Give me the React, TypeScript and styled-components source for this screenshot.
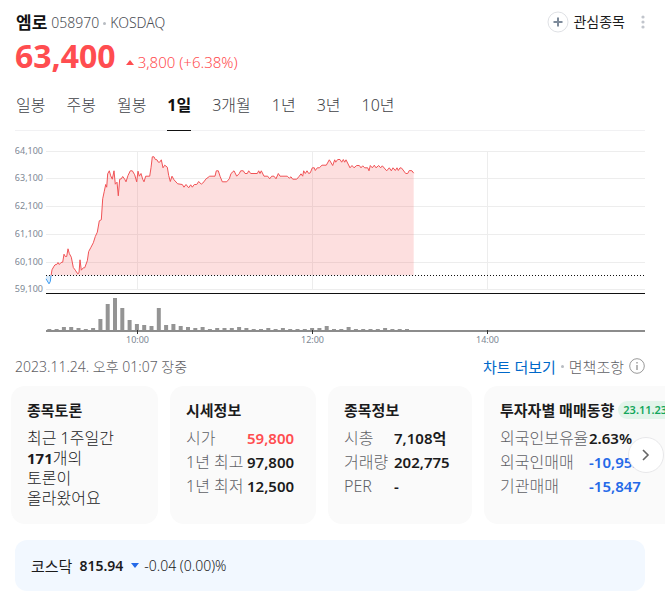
import React from "react";
import styled, { createGlobalStyle } from "styled-components";

const GlobalStyle = createGlobalStyle`
  *, *::before, *::after { box-sizing: border-box; }
  body {
    margin: 0;
    background: #fff;
    color: #1b1b1c;
    font-family: "Noto Sans", "Noto Sans CJK KR", sans-serif;
  }
  button { font: inherit; color: inherit; border: 0; padding: 0; background: none; cursor: pointer; }
  a { color: inherit; text-decoration: none; }
  h1, h2, p, dl, dd, dt { margin: 0; font: inherit; }
`;

const Page = styled.main`
  padding: 11px 20px 14px 15px;
  overflow: hidden;
`;

const Header = styled.header`
  display: flex;
  justify-content: space-between;
  align-items: flex-start;
  height: 26px;
`;

const TitleRow = styled.div`
  display: flex;
  align-items: center;
  gap: 4px;
  padding-left: 1px;
  height: 24px;
  line-height: 24px;
  font-size: 14px;
  font-weight: 300;
  color: #4a4d53;
`;

const Name = styled.h1`
  font-size: 17px;
  font-weight: 700;
  color: #111;
`;

const Dot = styled.span`
  width: 3px;
  height: 3px;
  border-radius: 50%;
  background: #b8bcc2;
`;

const Actions = styled.div`
  display: flex;
  align-items: center;
  gap: 14px;
  margin-right: -2px;
`;

const WatchButton = styled.button`
  display: flex;
  align-items: center;
  gap: 4px;
  font-size: 14px;
  line-height: 20px;
  color: #1b1b1c;
`;

const MoreButton = styled.button`
  display: flex;
  width: 8px;
  justify-content: center;
`;

const PriceRow = styled.div`
  display: flex;
  align-items: center;
  color: #ff4d50;
  height: 38px;
`;

const Price = styled.strong`
  font-size: 32px;
  line-height: 38px;
  font-weight: 700;
`;

const Change = styled.span`
  display: flex;
  align-items: center;
  gap: 4px;
  margin-left: 10px;
  padding-top: 12px;
  font-size: 15px;
  font-weight: 300;
  line-height: 20px;
`;

const Tabs = styled.div`
  display: flex;
  gap: 21px;
  margin-top: 13px;
  padding-left: 1px;
  border-bottom: 1px solid #f1f1f3;
`;

const Tab = styled.button<{ $active?: boolean }>`
  height: 43px;
  padding-bottom: 8px;
  margin-bottom: -1px;
  font-size: 16px;
  line-height: 24px;
  color: ${(p) => (p.$active ? "#111" : "#3f4247")};
  font-weight: ${(p) => (p.$active ? 700 : 300)};
  border-bottom: 1px solid ${(p) => (p.$active ? "#111" : "transparent")};
`;

const Chart = styled.svg`
  display: block;
  width: 100%;
  height: auto;
  margin-top: 4px;
`;

const AxisText = styled.text`
  font-size: 9px;
  fill: #7d8793;
`;

const ChartFooter = styled.div`
  display: flex;
  justify-content: space-between;
  align-items: center;
  margin-top: 4px;
  height: 24px;
  font-size: 14px;
  font-weight: 300;
  color: #5f6166;
`;

const Links = styled.div`
  display: flex;
  align-items: center;
  gap: 5px;
  font-size: 15px;
`;

const MoreLink = styled.a`
  color: #0068c9;
  font-weight: 400;
`;

const Disclaimer = styled.button`
  display: flex;
  align-items: center;
  gap: 5px;
`;

const Carousel = styled.section`
  position: relative;
  margin: 8px -20px 0 -4px;
`;

const Cards = styled.div`
  display: flex;
  gap: 12px;
  overflow: hidden;
`;

const Card = styled.article<{ $width: number }>`
  flex: none;
  width: ${(p) => p.$width}px;
  height: 138px;
  padding: 14px 16px;
  border-radius: 14px;
  background: #fafafa;
`;

const CardTitle = styled.h2`
  display: flex;
  align-items: center;
  gap: 4px;
  margin-bottom: 6px;
  font-size: 15px;
  line-height: 20px;
  font-weight: 700;
  white-space: nowrap;
`;

const DateBadge = styled.span`
  padding: 0 5px;
  border-radius: 9px;
  background: #e2f4ea;
  color: #12a65b;
  font-size: 11px;
  line-height: 18px;
  font-weight: 600;
`;

const Discussion = styled.p`
  font-size: 16px;
  font-weight: 300;
  line-height: 20px;
  padding-top: 2px;

  b { font-size: 15px; font-weight: 700; }
`;

const Stats = styled.dl<{ $label: number }>`
  display: grid;
  grid-template-columns: ${(p) => p.$label}px auto;
  justify-content: start;
  font-size: 16px;
  line-height: 24px;
  white-space: nowrap;
`;

const Label = styled.dt`
  color: #5f6166;
  font-weight: 300;
`;

const tones = { dark: "#1b1b1c", up: "#ff4d50", down: "#2469e8" };

const Value = styled.dd<{ $tone: keyof typeof tones }>`
  font-size: 15px;
  font-weight: 600;
  color: ${(p) => tones[p.$tone]};
`;

const NextButton = styled.button`
  position: absolute;
  top: 51px;
  right: 1px;
  display: grid;
  place-items: center;
  width: 36px;
  height: 36px;
  border: 1px solid #e8e8ea;
  border-radius: 50%;
  background: #fff;
`;

const IndexBar = styled.section`
  display: flex;
  align-items: center;
  margin-top: 16px;
  padding: 0 16px;
  height: 51px;
  border-radius: 12px;
  background: #f2f8ff;
  font-size: 14px;
`;

const IndexName = styled.span`
  font-size: 15px;
  font-weight: 400;
  margin-right: 7px;
`;

const IndexValue = styled.strong`
  font-weight: 600;
  margin-right: 8px;
`;

const IndexChange = styled.span`
  margin-left: 5px;
  font-weight: 300;
`;

/* Series coordinates are stored in thirds of a pixel. */
const SERIES = `138,430 147,445 151,438 153,421 156,403 162,392 165,388 170,387 174,381 178,387 183,381
188,380 192,356 196,363 200,363 204,340 208,354 214,365 220,396 226,404 233,415 237,412 240,373 244,404
250,397 254,397 262,376 266,348 272,337 280,322 286,303 292,290 298,256 304,253 308,190 313,167 317,147
320,155 323,115 328,106 332,121 337,131 342,106 346,146 351,140 355,181 359,131 364,130 368,123 374,131
378,139 384,120 391,106 397,106 404,118 410,139 414,107 418,122 423,114 428,131 432,139 437,122 449,122
453,97 457,64 462,64 466,72 471,73 475,80 479,80 484,73 489,97 494,89 502,95 506,120 511,138 516,122
522,133 533,145 547,147 552,155 558,147 566,157 572,148 577,155 583,147 590,147 596,138 604,146 612,139
617,131 629,122 645,122 649,106 655,106 660,122 667,139 680,139 688,130 693,114 702,106 710,122 718,114
722,106 730,106 735,114 742,114 746,106 752,114 772,114 776,106 780,114 784,106 792,122 803,122 809,130
815,122 822,122 828,130 835,114 840,122 862,122 868,128 873,124 878,131 890,131 898,122 903,115 908,122
911,106 916,114 921,106 926,114 931,112 937,97 943,97 946,105 952,97 958,97 966,89 979,89 988,73 998,90
1004,73 1007,80 1013,72 1020,72 1025,80 1030,72 1034,80 1038,73 1050,97 1056,90 1062,97 1070,90 1078,90
1083,97 1088,91 1094,97 1103,97 1107,106 1111,90 1117,97 1123,89 1128,97 1136,90 1142,97 1147,91 1160,106
1168,97 1174,106 1179,97 1186,105 1191,97 1195,105 1200,97 1205,98 1217,114 1223,114 1228,105 1236,106
1241,113`
  .split(/\s+/)
  .map((pair) => pair.split(",").map(Number))
  .map(([x, y]) => [x / 3 - 15, y / 3 + 0.5]);

const BASE_Y = 140.5;
const LINE = "M" + SERIES.map(([x, y]) => `${x.toFixed(1)} ${y.toFixed(1)}`).join("L");
const LAST_X = SERIES[SERIES.length - 1][0].toFixed(1);
const AREA = `${LINE}L${LAST_X} ${BASE_Y}L31 ${BASE_Y}Z`;

const VOLUMES = [
  2, 2, 4, 4, 3, 2, 3, 12, 27, 33, 23, 11, 7, 6, 5, 23, 6, 7, 5, 4, 3, 4, 2, 3, 3, 3, 4, 3, 2, 2, 3, 2, 3, 2,
  2, 2, 3, 3, 5, 2, 2, 4, 2, 2, 2, 2, 3, 2, 2, 2,
];

const PRICES = [
  { label: "64,100", y: 16.5 },
  { label: "63,100", y: 43.5 },
  { label: "62,100", y: 71.5 },
  { label: "61,100", y: 99.5 },
  { label: "60,100", y: 127.5 },
  { label: "59,100", y: 154.5 },
];

const TIMES = [
  { label: "10:00", x: 122.5 },
  { label: "12:00", x: 297.5 },
  { label: "14:00", x: 472.5 },
];

function PriceChart() {
  return (
    <Chart viewBox="0 0 630 215" role="img" aria-label="엠로 1일 차트">
      <defs>
        <clipPath id="above"><rect x="0" y="0" width="630" height={BASE_Y} /></clipPath>
        <clipPath id="below"><rect x="0" y={BASE_Y} width="630" height="30" /></clipPath>
      </defs>
      {PRICES.map((p) => (
        <g key={p.label}>
          <path d={`M31 ${p.y}H630`} stroke="#ededed" />
          <AxisText x="28" y={p.y + 2.5} textAnchor="end">{p.label}</AxisText>
        </g>
      ))}
      {TIMES.map((t) => (
        <path key={t.label} d={`M${t.x} 16V154`} stroke="#ededed" />
      ))}
      <g clipPath="url(#above)">
        <path d={AREA} fill="#f23b3b" fillOpacity="0.16" />
        <path d={LINE} fill="none" stroke="#f05356" />
      </g>
      <g clipPath="url(#below)">
        <path d={AREA} fill="#3b9bf2" fillOpacity="0.2" />
        <path d={LINE} fill="none" stroke="#3b9bf2" />
      </g>
      <path d={`M31 ${BASE_Y}H630`} stroke="#111" strokeDasharray="1 2" />
      <path d="M31 158.5H630" stroke="#111" />
      {VOLUMES.map((v, i) => (
        <rect key={i} x={32.3 + i * 7.3} y={196 - v} width="4" height={v} fill="#949494" />
      ))}
      <path d="M31 196H630" stroke="#8c8c8c" strokeWidth="2" />
      {TIMES.map((t) => (
        <g key={t.label}>
          <path d={`M${t.x} 195V199`} stroke="#333" />
          <AxisText x={t.x} y="208" textAnchor="middle">{t.label}</AxisText>
        </g>
      ))}
    </Chart>
  );
}

type Stat = { label: string; value: string; tone?: keyof typeof tones };

function StatCard(props: { title: string; width: number; label: number; stats: Stat[]; badge?: string }) {
  return (
    <Card $width={props.width}>
      <CardTitle>
        {props.title}
        {props.badge && <DateBadge>{props.badge}</DateBadge>}
      </CardTitle>
      <Stats $label={props.label}>
        {props.stats.map((s) => (
          <React.Fragment key={s.label}>
            <Label>{s.label}</Label>
            <Value $tone={s.tone ?? "dark"}>{s.value}</Value>
          </React.Fragment>
        ))}
      </Stats>
    </Card>
  );
}

const PERIODS = ["일봉", "주봉", "월봉", "1일", "3개월", "1년", "3년", "10년"];

export default function App() {
  return (
    <Page>
      <GlobalStyle />
      <Header>
        <TitleRow>
          <Name>엠로</Name>
          <span>058970</span>
          <Dot />
          <span>KOSDAQ</span>
        </TitleRow>
        <Actions>
          <WatchButton>
            <svg width="22" height="22" viewBox="0 0 22 22" aria-hidden="true">
              <circle cx="11" cy="11" r="10" fill="#fff" stroke="#dfe1e5" />
              <path d="M11 6.5V15.5M6.5 11H15.5" stroke="#7d8a9a" strokeWidth="2" />
            </svg>
            관심종목
          </WatchButton>
          <MoreButton aria-label="더보기">
            <svg width="4" height="16" viewBox="0 0 4 16" fill="#c1c5cc">
              <circle cx="2" cy="3" r="1.6" />
              <circle cx="2" cy="8" r="1.6" />
              <circle cx="2" cy="13" r="1.6" />
            </svg>
          </MoreButton>
        </Actions>
      </Header>
      <PriceRow>
        <Price>63,400</Price>
        <Change>
          <svg width="8" height="5" viewBox="0 0 8 5" fill="currentColor" aria-hidden="true">
            <path d="M4 0L8 5H0Z" />
          </svg>
          3,800 (+6.38%)
        </Change>
      </PriceRow>
      <Tabs role="tablist">
        {PERIODS.map((p) => (
          <Tab key={p} role="tab" aria-selected={p === "1일"} $active={p === "1일"}>{p}</Tab>
        ))}
      </Tabs>
      <PriceChart />
      <ChartFooter>
        <span>2023.11.24. 오후 01:07 장중</span>
        <Links>
          <MoreLink href="#chart">차트 더보기</MoreLink>
          <Dot />
          <Disclaimer>
            면책조항
            <svg width="16" height="16" viewBox="0 0 16 16" fill="none" stroke="#999" aria-hidden="true">
              <circle cx="8" cy="8" r="7.3" />
              <path d="M8 7V12M8 4V5.5" strokeWidth="1.4" />
            </svg>
          </Disclaimer>
        </Links>
      </ChartFooter>
      <Carousel>
        <Cards>
          <Card $width={147}>
            <CardTitle>종목토론</CardTitle>
            <Discussion>
              최근 1주일간<br /><b>171</b>개의<br />토론이<br />올라왔어요
            </Discussion>
          </Card>
          <StatCard title="시세정보" width={146} label={61} stats={[
            { label: "시가", value: "59,800", tone: "up" },
            { label: "1년 최고", value: "97,800" },
            { label: "1년 최저", value: "12,500" },
          ]} />
          <StatCard title="종목정보" width={144} label={50} stats={[
            { label: "시총", value: "7,108억" },
            { label: "거래량", value: "202,775" },
            { label: "PER", value: "-" },
          ]} />
          <StatCard title="투자자별 매매동향" width={230} label={89} badge="23.11.23." stats={[
            { label: "외국인보유율", value: "2.63%" },
            { label: "외국인매매", value: "-10,953", tone: "down" },
            { label: "기관매매", value: "-15,847", tone: "down" },
          ]} />
        </Cards>
        <NextButton aria-label="다음">
          <svg width="8" height="12" viewBox="0 0 8 12" fill="none" stroke="#666" strokeWidth="1.6" aria-hidden="true">
            <path d="M1 1L6 6L1 11" />
          </svg>
        </NextButton>
      </Carousel>
      <IndexBar>
        <IndexName>코스닥</IndexName>
        <IndexValue>815.94</IndexValue>
        <svg width="8" height="5" viewBox="0 0 8 5" fill="#2469e8" aria-hidden="true">
          <path d="M0 0H8L4 5Z" />
        </svg>
        <IndexChange>-0.04 (0.00)%</IndexChange>
      </IndexBar>
    </Page>
  );
}
